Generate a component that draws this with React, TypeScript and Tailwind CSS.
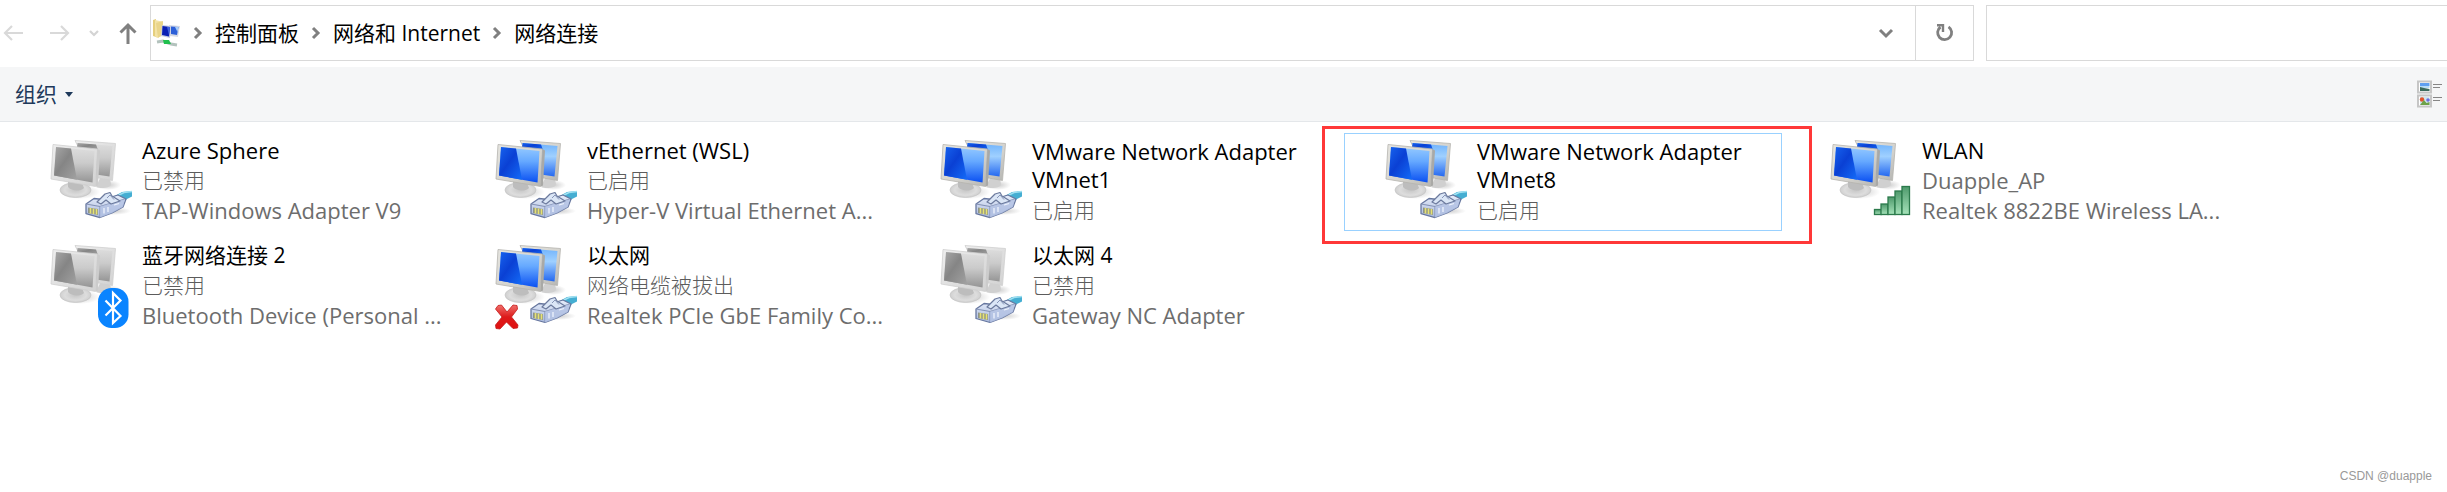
type Badge = "cable" | "bluetooth" | "signal";

type Connection = {
  name: string[];
  status: string;
  device?: string;
  enabled: boolean;
  badge: Badge;
  unplugged?: boolean;
  selected?: boolean;
};

const connections: Connection[] = [
  { name: ["Azure Sphere"], status: "已禁用", device: "TAP-Windows Adapter V9", enabled: false, badge: "cable" },
  { name: ["vEthernet (WSL)"], status: "已启用", device: "Hyper-V Virtual Ethernet A...", enabled: true, badge: "cable" },
  { name: ["VMware Network Adapter", "VMnet1"], status: "已启用", enabled: true, badge: "cable" },
  { name: ["VMware Network Adapter", "VMnet8"], status: "已启用", enabled: true, badge: "cable", selected: true },
  { name: ["WLAN"], status: "Duapple_AP", device: "Realtek 8822BE Wireless LA...", enabled: true, badge: "signal" },
  { name: ["蓝牙网络连接 2"], status: "已禁用", device: "Bluetooth Device (Personal ...", enabled: false, badge: "bluetooth" },
  { name: ["以太网"], status: "网络电缆被拔出", device: "Realtek PCIe GbE Family Co...", enabled: true, badge: "cable", unplugged: true },
  { name: ["以太网 4"], status: "已禁用", device: "Gateway NC Adapter", enabled: false, badge: "cable" },
];

const crumbs = ["控制面板", "网络和 Internet", "网络连接"];

function isChinese(s: string) {
  return /[\u4e00-\u9fff]/.test(s);
}

// Gradients shared by every connection icon
function IconDefs() {
  return (
    <svg width="0" height="0" className="absolute" aria-hidden="true">
      <defs>
        <linearGradient id="frame" x1="0" y1="0" x2="1" y2="1">
          <stop offset="0" stopColor="#e6e5e0" />
          <stop offset="0.6" stopColor="#d3d2cd" />
          <stop offset="1" stopColor="#b4b4b1" />
        </linearGradient>
        <linearGradient id="frameOff" x1="0" y1="0" x2="1" y2="1">
          <stop offset="0" stopColor="#eeeeee" />
          <stop offset="1" stopColor="#d2d2d2" />
        </linearGradient>
        <linearGradient id="dark" x1="0" y1="0" x2="1" y2="1">
          <stop offset="0" stopColor="#1763ee" />
          <stop offset="0.45" stopColor="#0a40d4" />
          <stop offset="1" stopColor="#146cf8" />
        </linearGradient>
        <linearGradient id="darkOff" x1="0" y1="0" x2="1" y2="1">
          <stop offset="0" stopColor="#a8a8a8" />
          <stop offset="0.45" stopColor="#858585" />
          <stop offset="1" stopColor="#a2a2a2" />
        </linearGradient>
        <linearGradient id="light" x1="0" y1="0" x2="0" y2="1">
          <stop offset="0" stopColor="#94c9ff" />
          <stop offset="0.4" stopColor="#66a9ff" />
          <stop offset="1" stopColor="#0a50f2" />
        </linearGradient>
        <linearGradient id="lightBack" x1="0" y1="0" x2="0" y2="1">
          <stop offset="0" stopColor="#6fb2fb" />
          <stop offset="0.4" stopColor="#9fd0ff" />
          <stop offset="1" stopColor="#2468f0" />
        </linearGradient>
        <linearGradient id="lightOff" x1="0" y1="0" x2="0" y2="1">
          <stop offset="0" stopColor="#dedede" />
          <stop offset="0.45" stopColor="#cbcbcb" />
          <stop offset="1" stopColor="#959595" />
        </linearGradient>
        <radialGradient id="stand">
          <stop offset="0" stopColor="#c6c6c6" />
          <stop offset="0.7" stopColor="#dddddd" />
          <stop offset="1" stopColor="#cfcfcf" />
        </radialGradient>
        <radialGradient id="shade">
          <stop offset="0" stopColor="#999" stopOpacity="0.5" />
          <stop offset="1" stopColor="#999" stopOpacity="0" />
        </radialGradient>
        <linearGradient id="plug" x1="0" y1="0" x2="0" y2="1">
          <stop offset="0" stopColor="#e7eefb" />
          <stop offset="1" stopColor="#a9b9dc" />
        </linearGradient>
        <linearGradient id="bars" x1="0" y1="0" x2="0" y2="1">
          <stop offset="0" stopColor="#4f9a6c" />
          <stop offset="1" stopColor="#a5e2b9" />
        </linearGradient>
        <linearGradient id="cross" x1="0" y1="0" x2="0" y2="1">
          <stop offset="0" stopColor="#f0706c" />
          <stop offset="0.5" stopColor="#dd1a1a" />
          <stop offset="1" stopColor="#e01010" />
        </linearGradient>
      </defs>
    </svg>
  );
}

function CableBadge() {
  return (
    <g strokeLinejoin="round">
      <ellipse cx="65" cy="73" rx="18" ry="4" fill="url(#shade)" />
      <path d="M65 59 L74 54 L84 53 V58.500 L79 61 L75 64 Z" fill="#45aed2" />
      <path d="M69 58 L76 54.500 L84 53.500" fill="none" stroke="#9fe0f1" strokeWidth="1.500" />
      <path d="M38 66 L46 60.500 L55 61.500 L70 57 L78 61 L75 69 L64 75 L52 79.500 L38 75.500 Z" fill="url(#plug)" stroke="#67779f" strokeWidth="1.300" />
      <path d="M38 66 L52 68.500 L77 61 M52 68.500 V79.500" fill="none" stroke="#8492b5" strokeWidth="1.200" />
      <path d="M52 68.500 L77 61 L75 69 L64 75 L52 79.500 Z" fill="#b3c2e3" opacity="0.800" />
      <path d="M49 64 L57 56 L62 54.500 L64 58 L72 63 L63 66 L58 62 L53 66 Z" fill="#dbe6f6" stroke="#6c7a9d" strokeWidth="1.200" />
      <path d="M59 60 L62 57 L66 61.500" fill="none" stroke="#8795b7" />
      <path d="M40 69.500 L50 71 V77 L40 75 Z" fill="#8f9588" />
      <path d="M42.500 70 V75.500 M45.500 70.500 V76 M48.500 71 V76.500" stroke="#e6e272" strokeWidth="1.600" />
      <path d="M56 70 V75.500 M60 69 V74 M66 67 L71 65.500" stroke="#eef3fc" strokeWidth="1.300" />
    </g>
  );
}

function BluetoothBadge() {
  return (
    <g>
      <rect x="50" y="45" width="30.500" height="40" rx="13.500" fill="#0a84ff" />
      <path d="M57.500 57.500 L72.500 73 L65 80 V50 L72.500 57.500 L57.500 72.500" fill="none" stroke="#fff" strokeWidth="2.200" />
    </g>
  );
}

function SignalBadge() {
  return (
    <g fill="url(#bars)" stroke="#2c7a4c" strokeWidth="1.300">
      <rect x="46.500" y="71.500" width="7" height="5" />
      <rect x="53" y="66" width="7" height="10.500" />
      <rect x="60" y="59" width="7" height="17.500" />
      <rect x="67" y="53" width="7" height="23.500" />
      <rect x="74" y="48.500" width="7.500" height="28" />
    </g>
  );
}

function ConnectionIcon({ enabled, badge, unplugged }: { enabled: boolean; badge: Badge; unplugged?: boolean }) {
  const frame = enabled ? "url(#frame)" : "url(#frameOff)";
  const dark = enabled ? "url(#dark)" : "url(#darkOff)";
  const light = enabled ? "url(#light)" : "url(#lightOff)";
  const lightBack = enabled ? "url(#lightBack)" : "url(#lightOff)";
  const edge = enabled ? "#b5b4af" : "#cfcfcf";

  return (
    <svg viewBox="0 0 88 88" className="mt-[3px] size-[88px] shrink-0" aria-hidden="true">
      {/* back monitor */}
      <ellipse cx="60" cy="47" rx="13" ry="5" fill="url(#shade)" />
      <path d="M52 40 L62 41 L63 46 C63 50 53 51 48 49 Z" fill="#d0d0d0" />
      <path d="M27 2.500 L67.500 5.500 L64.500 42.500 L45 39 Z" fill={frame} stroke={edge} strokeWidth="0.800" />
      <path d="M29.500 5 L64.500 8 L61.500 38.500 L48 36.500 Z" fill={lightBack} />
      <path d="M29.500 5 L48 6.600 L50 12 L29 10 Z" fill={dark} />
      {/* front monitor */}
      <ellipse cx="32" cy="54" rx="20" ry="7" fill="url(#shade)" />
      <ellipse cx="27.500" cy="52" rx="15.500" ry="7.500" fill="url(#stand)" stroke="#c4c4c4" strokeWidth="0.700" />
      <path d="M20 43 L34 45 L36 50 C32 54 23 53 20 49 Z" fill="#bdbdbd" />
      <path d="M5 6.500 L49.500 11 L47.500 48.500 L3 41 Z" fill={frame} stroke={edge} strokeWidth="0.800" />
      <path d="M49.500 11 L52 12.500 L50 47.500 L47.500 48.500 Z" fill={enabled ? "#a9a9a6" : "#cccccc"} />
      <path d="M8 9 L46.500 13 L44.500 44.500 L6 37.500 Z" fill={light} />
      <path d="M8 9 L23 10.500 L29 41.700 L6 37.500 Z" fill={dark} />

      {badge === "cable" ? <CableBadge /> : null}
      {badge === "bluetooth" ? <BluetoothBadge /> : null}
      {badge === "signal" ? <SignalBadge /> : null}
      {unplugged ? (
        <path
          d="M5 62.500 L8.500 62 L14 69 L20 62 L24 62.500 L24.500 66 L18.500 74 L25 82 L24.500 85 L20 85.500 L13.500 79 L7 86 L3 85.500 L2.500 82 L9 74 L2.500 66 Z"
          fill="url(#cross)"
          stroke="#c41a1a"
          strokeWidth="0.800"
        />
      ) : null}
    </svg>
  );
}

function ConnectionItem({ item }: { item: Connection }) {
  const twoLines = item.name.length > 1;

  return (
    <li className="relative">
      <button
        type="button"
        className={
          item.selected
            ? "flex h-[98px] w-full items-start gap-[6px] border border-[#99d1ff] pl-[38px] pt-px text-left"
            : "flex h-[98px] w-full items-start gap-[6px] border border-transparent pl-[38px] pt-px text-left"
        }
      >
        <ConnectionIcon enabled={item.enabled} badge={item.badge} unplugged={item.unplugged} />
        <span className="flex flex-col whitespace-nowrap">
          <span className={twoLines ? "flex flex-col py-0.5 leading-7 text-black" : "flex flex-col leading-[30px] text-black"}>
            {item.name.map((line) => (
              <span key={line} className={isChinese(line) ? "text-[21px]" : "text-[22px]"}>
                {line}
              </span>
            ))}
          </span>
          <span
            className={
              isChinese(item.status)
                ? "text-[21px] font-light leading-[30px] text-[#5c5c5c]"
                : "text-[22px] leading-[30px] text-[#6d6d6d]"
            }
          >
            {item.status}
          </span>
          {item.device ? (
            <span className="text-[22px] leading-[30px] text-[#6d6d6d]">{item.device}</span>
          ) : null}
        </span>
      </button>
      {item.selected ? (
        <span className="pointer-events-none absolute -bottom-[13px] -left-[22px] -right-[30px] -top-[7px] border-[3px] border-[#ff3838]" />
      ) : null}
    </li>
  );
}

function Separator() {
  return (
    <svg viewBox="0 0 34 20" className="h-5 w-[34px] shrink-0" aria-hidden="true">
      <path d="M14 5 L19 10 L14 15" fill="none" stroke="#808080" strokeWidth="3" />
    </svg>
  );
}

function FolderIcon() {
  return (
    <svg viewBox="0 0 28 28" className="size-7 shrink-0" aria-hidden="true">
      <path d="M0 1 L3 0 L3 18 L0 17 Z" fill="#e6cf7d" />
      <path d="M2 1 L9 2.500 V17 L4 19 L2 17 Z" fill="#f3e3a6" />
      <path d="M3 4 L10 2 L10 15 L5 19 Z" fill="#ead58a" />
      <path d="M16 6 L27 7 L25 18 L17 17 Z" fill="#d5d9e4" />
      <path d="M18 7.500 L25.500 8 L24 16 L18 15 Z" fill="#2c5fd8" />
      <path d="M22 8 L25.500 8 L24.500 13 Z" fill="#a5cbf8" />
      <path d="M9 6 L18 7 L17 19 L8 17 Z" fill="#c5cbe0" />
      <path d="M9.500 7 L17 8 L16 17.500 L9 16 Z" fill="#0a1fb4" />
      <path d="M14 8 L17 8 L16 16 Z" fill="#3f63dd" />
      <path d="M4 23 L10 22 L18 25 L24 26" fill="none" stroke="#b3c2bd" strokeWidth="3" />
      <path d="M10 21 L16 21 L18 25 L11 25 Z" fill="#21c04e" />
    </svg>
  );
}

function AddressBar() {
  return (
    <div className="flex h-[67px] items-center bg-white pt-[5px] pb-[6px]">
      <div className="flex w-[150px] shrink-0 items-center">
        <button type="button" aria-label="返回" className="pl-[3px]">
          <svg viewBox="0 0 24 24" className="size-6" fill="none" stroke="#d9d9d9" strokeWidth="2.200">
            <path d="M20 12 H2 M9 5 L2 12 L9 19" />
          </svg>
        </button>
        <button type="button" aria-label="前进" className="pl-[22px]">
          <svg viewBox="0 0 24 24" className="size-6" fill="none" stroke="#d9d9d9" strokeWidth="2.200">
            <path d="M1 12 H19 M12 5 L19 12 L12 19" />
          </svg>
        </button>
        <button type="button" aria-label="最近浏览的位置" className="pl-[15px]">
          <svg viewBox="0 0 12 12" className="size-3" fill="none" stroke="#d4d4d4" strokeWidth="2.200">
            <path d="M2 4 L6 8 L10 4" />
          </svg>
        </button>
        <button type="button" aria-label="上移" className="pl-4">
          <svg viewBox="0 0 24 24" className="size-6" fill="none" stroke="#808080" strokeWidth="3">
            <path d="M12 23 V4 M4.500 11.500 L12 4 L19.500 11.500" />
          </svg>
        </button>
      </div>

      <div className="flex h-14 min-w-0 flex-1 items-center border border-[#d9d9d9] pl-[2px]">
        <FolderIcon />
        <nav className="flex flex-1 items-center whitespace-nowrap text-[21px] leading-7 text-black">
          {crumbs.map((c) => (
            <span key={c} className="flex items-center">
              <Separator />
              <a href="#">{c}</a>
            </span>
          ))}
        </nav>
        <button type="button" aria-label="以前的位置" className="flex w-[59px] justify-center">
          <svg viewBox="0 0 16 16" className="size-4" fill="none" stroke="#808080" strokeWidth="3">
            <path d="M2 5 L8 11 L14 5" />
          </svg>
        </button>
        <button type="button" aria-label="刷新" className="flex h-full w-[58px] items-center justify-center border-l border-[#d9d9d9]">
          <svg viewBox="0 0 20 20" className="size-5" fill="none" stroke="#808080" strokeWidth="2.800">
            <path d="M5.500 4 A7 7 0 1 0 13.500 3.800" />
            <path d="M2 2.300 H8 V9" strokeWidth="2.400" />
          </svg>
        </button>
      </div>

      <input
        type="text"
        aria-label="搜索"
        className="ml-3 h-14 w-[461px] shrink-0 border border-r-0 border-[#d9d9d9] bg-white px-3 text-[21px] outline-none"
      />
    </div>
  );
}

function Toolbar() {
  return (
    <div className="flex h-[55px] items-center justify-between border-b border-[#e4e7ea] bg-[#f5f6f7] pl-[15px] pr-1">
      <button type="button" className="flex items-center gap-2 text-[21px] leading-7 text-[#1e395b]">
        组织
        <svg viewBox="0 0 8 5" className="h-[5px] w-2" aria-hidden="true">
          <path d="M0 0 H8 L4 5 Z" fill="#1e395b" />
        </svg>
      </button>
      <button type="button" aria-label="更改视图">
        <svg viewBox="0 0 26 28" className="h-7 w-[26px]" aria-hidden="true">
          <rect x="1" y="1.500" width="13" height="11" fill="#fff" stroke="#c6c6c6" strokeWidth="2" />
          <rect x="3" y="3" width="9.500" height="3" fill="#5f9ff0" />
          <rect x="3" y="6" width="9.500" height="2" fill="#b7dcf5" />
          <path d="M3 7 L7 8 L12.500 9 V11 H3 Z" fill="#3c6b5c" />
          <rect x="1" y="15.500" width="13" height="11" fill="#fff" stroke="#c6c6c6" strokeWidth="2" />
          <rect x="3" y="17" width="9.500" height="8" fill="#cfe6ef" />
          <circle cx="5" cy="19.500" r="2.200" fill="#e2542b" />
          <circle cx="11" cy="20" r="1.800" fill="#6d6ee0" />
          <path d="M3 25 L7 20 L9.500 23 L12.500 22 V25 Z" fill="#6da24a" />
          <path d="M16 4.500 H25 M16 7.500 H23 M16 17.500 H25 M16 20.500 H23" stroke="#868686" strokeWidth="1.200" />
        </svg>
      </button>
    </div>
  );
}

export default function App() {
  return (
    <div className="flex min-h-screen flex-col overflow-hidden bg-white font-['Open_Sans','Noto_Sans_CJK_SC',sans-serif]">
      <IconDefs />
      <AddressBar />
      <Toolbar />
      <main className="pl-[9px] pt-[11px]">
        <ul className="grid grid-cols-[repeat(auto-fill,438px)] gap-[7px]">
          {connections.map((item) => (
            <ConnectionItem key={item.name.join(" ")} item={item} />
          ))}
        </ul>
      </main>
      <footer className="mt-auto pb-2 pr-[15px] text-right font-['Liberation_Sans',sans-serif] text-xs text-[#999]">
        CSDN @duapple
      </footer>
    </div>
  );
}
